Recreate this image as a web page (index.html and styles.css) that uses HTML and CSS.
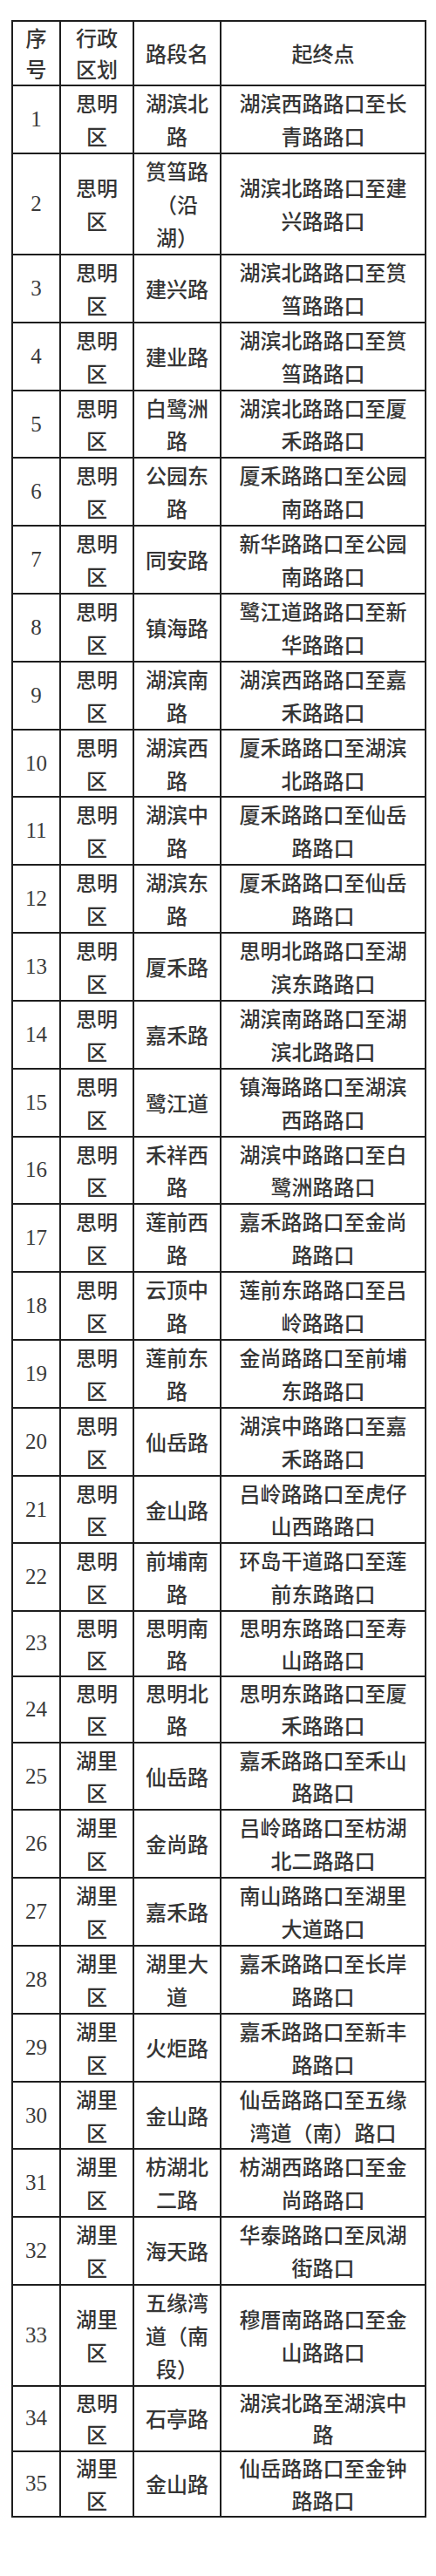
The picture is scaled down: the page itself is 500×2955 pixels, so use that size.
FILE: index.html
```html
<!DOCTYPE html>
<html lang="zh-CN">
<head>
<meta charset="utf-8">
<title>路段表</title>
<link rel="stylesheet" href="styles.css">
</head>
<body>
<table class="roads">
  <colgroup>
    <col class="c-no">
    <col class="c-dist">
    <col class="c-road">
    <col class="c-range">
  </colgroup>
  <thead>
    <tr class="head"><th>序号</th><th>行政区划</th><th>路段名</th><th>起终点</th></tr>
  </thead>
  <tbody>
    <tr><td class="num">1</td><td>思明区</td><td>湖滨北路</td><td>湖滨西路路口至长青路路口</td></tr>
    <tr><td class="num">2</td><td>思明区</td><td>筼筜路（沿湖）</td><td>湖滨北路路口至建兴路路口</td></tr>
    <tr><td class="num">3</td><td>思明区</td><td>建兴路</td><td>湖滨北路路口至筼筜路路口</td></tr>
    <tr><td class="num">4</td><td>思明区</td><td>建业路</td><td>湖滨北路路口至筼筜路路口</td></tr>
    <tr><td class="num">5</td><td>思明区</td><td>白鹭洲路</td><td>湖滨北路路口至厦禾路路口</td></tr>
    <tr><td class="num">6</td><td>思明区</td><td>公园东路</td><td>厦禾路路口至公园南路路口</td></tr>
    <tr><td class="num">7</td><td>思明区</td><td>同安路</td><td>新华路路口至公园南路路口</td></tr>
    <tr><td class="num">8</td><td>思明区</td><td>镇海路</td><td>鹭江道路路口至新华路路口</td></tr>
    <tr><td class="num">9</td><td>思明区</td><td>湖滨南路</td><td>湖滨西路路口至嘉禾路路口</td></tr>
    <tr><td class="num">10</td><td>思明区</td><td>湖滨西路</td><td>厦禾路路口至湖滨北路路口</td></tr>
    <tr><td class="num">11</td><td>思明区</td><td>湖滨中路</td><td>厦禾路路口至仙岳路路口</td></tr>
    <tr><td class="num">12</td><td>思明区</td><td>湖滨东路</td><td>厦禾路路口至仙岳路路口</td></tr>
    <tr><td class="num">13</td><td>思明区</td><td>厦禾路</td><td>思明北路路口至湖滨东路路口</td></tr>
    <tr><td class="num">14</td><td>思明区</td><td>嘉禾路</td><td>湖滨南路路口至湖滨北路路口</td></tr>
    <tr><td class="num">15</td><td>思明区</td><td>鹭江道</td><td>镇海路路口至湖滨西路路口</td></tr>
    <tr><td class="num">16</td><td>思明区</td><td>禾祥西路</td><td>湖滨中路路口至白鹭洲路路口</td></tr>
    <tr><td class="num">17</td><td>思明区</td><td>莲前西路</td><td>嘉禾路路口至金尚路路口</td></tr>
    <tr><td class="num">18</td><td>思明区</td><td>云顶中路</td><td>莲前东路路口至吕岭路路口</td></tr>
    <tr><td class="num">19</td><td>思明区</td><td>莲前东路</td><td>金尚路路口至前埔东路路口</td></tr>
    <tr><td class="num">20</td><td>思明区</td><td>仙岳路</td><td>湖滨中路路口至嘉禾路路口</td></tr>
    <tr><td class="num">21</td><td>思明区</td><td>金山路</td><td>吕岭路路口至虎仔山西路路口</td></tr>
    <tr><td class="num">22</td><td>思明区</td><td>前埔南路</td><td>环岛干道路口至莲前东路路口</td></tr>
    <tr class="short"><td class="num">23</td><td>思明区</td><td>思明南路</td><td>思明东路路口至寿山路路口</td></tr>
    <tr class="short"><td class="num">24</td><td>思明区</td><td>思明北路</td><td>思明东路路口至厦禾路路口</td></tr>
    <tr><td class="num">25</td><td>湖里区</td><td>仙岳路</td><td>嘉禾路路口至禾山路路口</td></tr>
    <tr><td class="num">26</td><td>湖里区</td><td>金尚路</td><td>吕岭路路口至枋湖北二路路口</td></tr>
    <tr><td class="num">27</td><td>湖里区</td><td>嘉禾路</td><td>南山路路口至湖里大道路口</td></tr>
    <tr><td class="num">28</td><td>湖里区</td><td>湖里大道</td><td>嘉禾路路口至长岸路路口</td></tr>
    <tr><td class="num">29</td><td>湖里区</td><td>火炬路</td><td>嘉禾路路口至新丰路路口</td></tr>
    <tr><td class="num">30</td><td>湖里区</td><td>金山路</td><td>仙岳路路口至五缘湾道（南）路口</td></tr>
    <tr><td class="num">31</td><td>湖里区</td><td>枋湖北二路</td><td>枋湖西路路口至金尚路路口</td></tr>
    <tr><td class="num">32</td><td>湖里区</td><td>海天路</td><td>华泰路路口至凤湖街路口</td></tr>
    <tr><td class="num">33</td><td>湖里区</td><td>五缘湾道（南段）</td><td>穆厝南路路口至金山路路口</td></tr>
    <tr class="short"><td class="num">34</td><td>思明区</td><td>石亭路</td><td>湖滨北路至湖滨中路</td></tr>
    <tr class="short"><td class="num">35</td><td>湖里区</td><td>金山路</td><td>仙岳路路口至金钟路路口</td></tr>
  </tbody>
</table>
</body>
</html>
```

FILE: styles.css
```css
html {
  background: #ffffff;
}

body {
  margin: 0;
  padding: 23px 0 30px 13px;
  font-family: "Noto Sans CJK SC", "Noto Sans", sans-serif;
  color: #353535;
}

.roads {
  border-collapse: collapse;
  table-layout: fixed;
  width: 474px;
}

.c-no { width: 55px; }
.c-dist { width: 84px; }
.c-road { width: 100px; }
.c-range { width: 235px; }

.roads th,
.roads td {
  border: 2px solid #1e1e1e;
  padding: 0 10px;
  font-size: 24px;
  font-weight: 500;
  line-height: 37.9px;
  text-align: center;
  vertical-align: middle;
  text-spacing-trim: space-all;
  word-break: normal;
}

.roads .head th {
  line-height: 36.2px;
}

.roads .short td {
  line-height: 36.6px;
}

.roads td.num {
  font-family: "Liberation Serif", "Noto Sans CJK SC", serif;
  font-size: 25px;
  font-weight: 400;
  color: #3a3a3a;
}
```
